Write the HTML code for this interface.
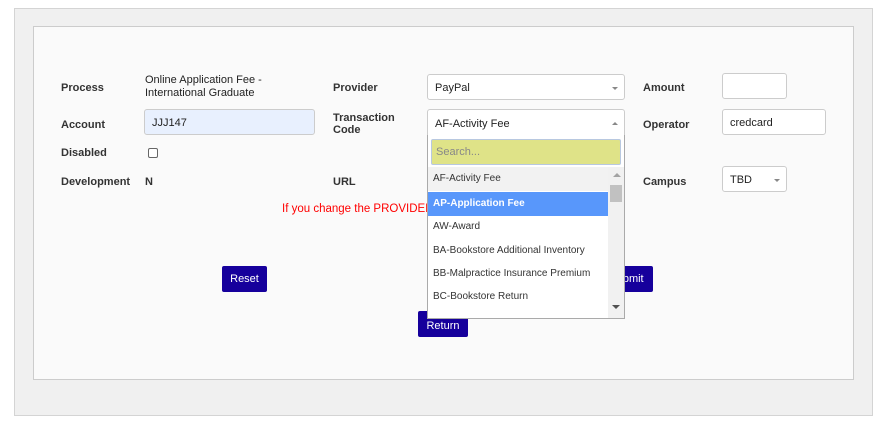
<!DOCTYPE html><html><head><style>
*{box-sizing:border-box;margin:0;padding:0}
body{width:886px;height:424px;background:#fff;font-family:"Liberation Sans",sans-serif;font-size:11px;color:#222;position:relative;overflow:hidden}
.a{position:absolute}
.l{position:absolute;font-weight:bold;color:#333}
.in{position:absolute;background:#fff;border:1px solid #ccc;border-radius:3px;padding-left:7px;padding-top:2px;font-size:11px;display:flex;align-items:center}
.btn{position:absolute;background:#16009c;color:#fff;border-radius:2px;display:flex;align-items:center;justify-content:center;font-size:11px}
.car{position:absolute;right:6px;top:12px;width:0;height:0;border-left:3px solid transparent;border-right:3px solid transparent;border-top:3px solid #888}
.it{position:absolute;left:0;width:180px;padding-left:5px;font-size:10px;color:#333;height:24px;line-height:24px}
</style></head><body>
<div class="a" style="left:14px;top:8px;width:859px;height:408px;background:#f0f0f0;border:1px solid #d4d4d4"></div>
<div class="a" style="left:33px;top:26px;width:821px;height:354px;background:#fafafa;border:1px solid #ccc"></div>

<div class="l" style="left:61px;top:82px">Process</div>
<div class="a" style="left:145px;top:74px;line-height:13px">Online Application Fee -<br>International Graduate</div>
<div class="l" style="left:61px;top:119px">Account</div>
<div class="in" style="left:144px;top:109px;width:171px;height:26px;background:#e8f0fe">JJJ147</div>
<div class="l" style="left:61px;top:147px">Disabled</div>
<div class="a" style="left:148px;top:148px;width:10px;height:10px;border:1px solid #666;border-radius:2px;background:#fff"></div>
<div class="l" style="left:61px;top:176px">Development</div>
<div class="l" style="left:145px;top:176px">N</div>

<div class="l" style="left:333px;top:82px">Provider</div>
<div class="in" style="left:427px;top:74px;width:198px;height:26px">PayPal<div class="car"></div></div>
<div class="l" style="left:333px;top:112px;line-height:12px">Transaction<br>Code</div>
<div class="in" style="left:427px;top:109px;width:198px;height:27px;border-radius:3px 3px 0 0">AF-Activity Fee<div class="car" style="border-top:0;border-bottom:3px solid #888"></div></div>
<div class="l" style="left:333px;top:176px">URL</div>

<div class="l" style="left:643px;top:82px">Amount</div>
<div class="in" style="left:722px;top:73px;width:65px;height:26px"></div>
<div class="l" style="left:643px;top:119px">Operator</div>
<div class="in" style="left:722px;top:109px;width:104px;height:26px">credcard</div>
<div class="l" style="left:643px;top:176px">Campus</div>
<div class="in" style="left:722px;top:166px;width:65px;height:26px">TBD<div class="car"></div></div>

<div class="a" style="left:282px;top:203px;color:#f00;font-size:11.5px">If you change the PROVIDER,</div>

<div class="btn" style="left:222px;top:266px;width:45px;height:26px">Reset</div>
<div class="btn" style="left:600px;top:266px;width:53px;height:26px">Submit</div>
<div class="btn" style="left:418px;top:311px;width:50px;height:26px;align-items:flex-end;padding-bottom:5px">Return</div>

<div class="a" style="left:427px;top:135px;width:198px;height:184px;background:#fff;border:1px solid #aaa;border-top:0;overflow:hidden">
<div class="a" style="left:3px;top:4px;width:190px;height:26px;background:#dfe388;border:1px solid #b8c8e0;border-radius:2px;padding-left:4px;line-height:24px;color:#888;font-size:11px">Search...</div>
<div class="it" style="top:32px;background:#f2f2f2;height:24px">AF-Activity Fee</div>
<div class="it" style="top:57px;background:#5897fb;color:#fff;font-weight:bold;height:24px">AP-Application Fee</div>
<div class="it" style="top:80px">AW-Award</div>
<div class="it" style="top:104px">BA-Bookstore Additional Inventory</div>
<div class="it" style="top:127px">BB-Malpractice Insurance Premium</div>
<div class="it" style="top:150px">BC-Bookstore Return</div>
<div class="a" style="left:180px;top:32px;width:17px;height:152px;background:#f1f1f1">
<div class="a" style="left:5px;top:6px;border-left:4px solid transparent;border-right:4px solid transparent;border-bottom:4px solid #a3a3a3"></div>
<div class="a" style="left:2px;top:18px;width:12px;height:17px;background:#c1c1c1"></div>
<div class="a" style="left:4px;top:138px;border-left:4px solid transparent;border-right:4px solid transparent;border-top:4px solid #505050"></div>
</div>
</div>
</body></html>
